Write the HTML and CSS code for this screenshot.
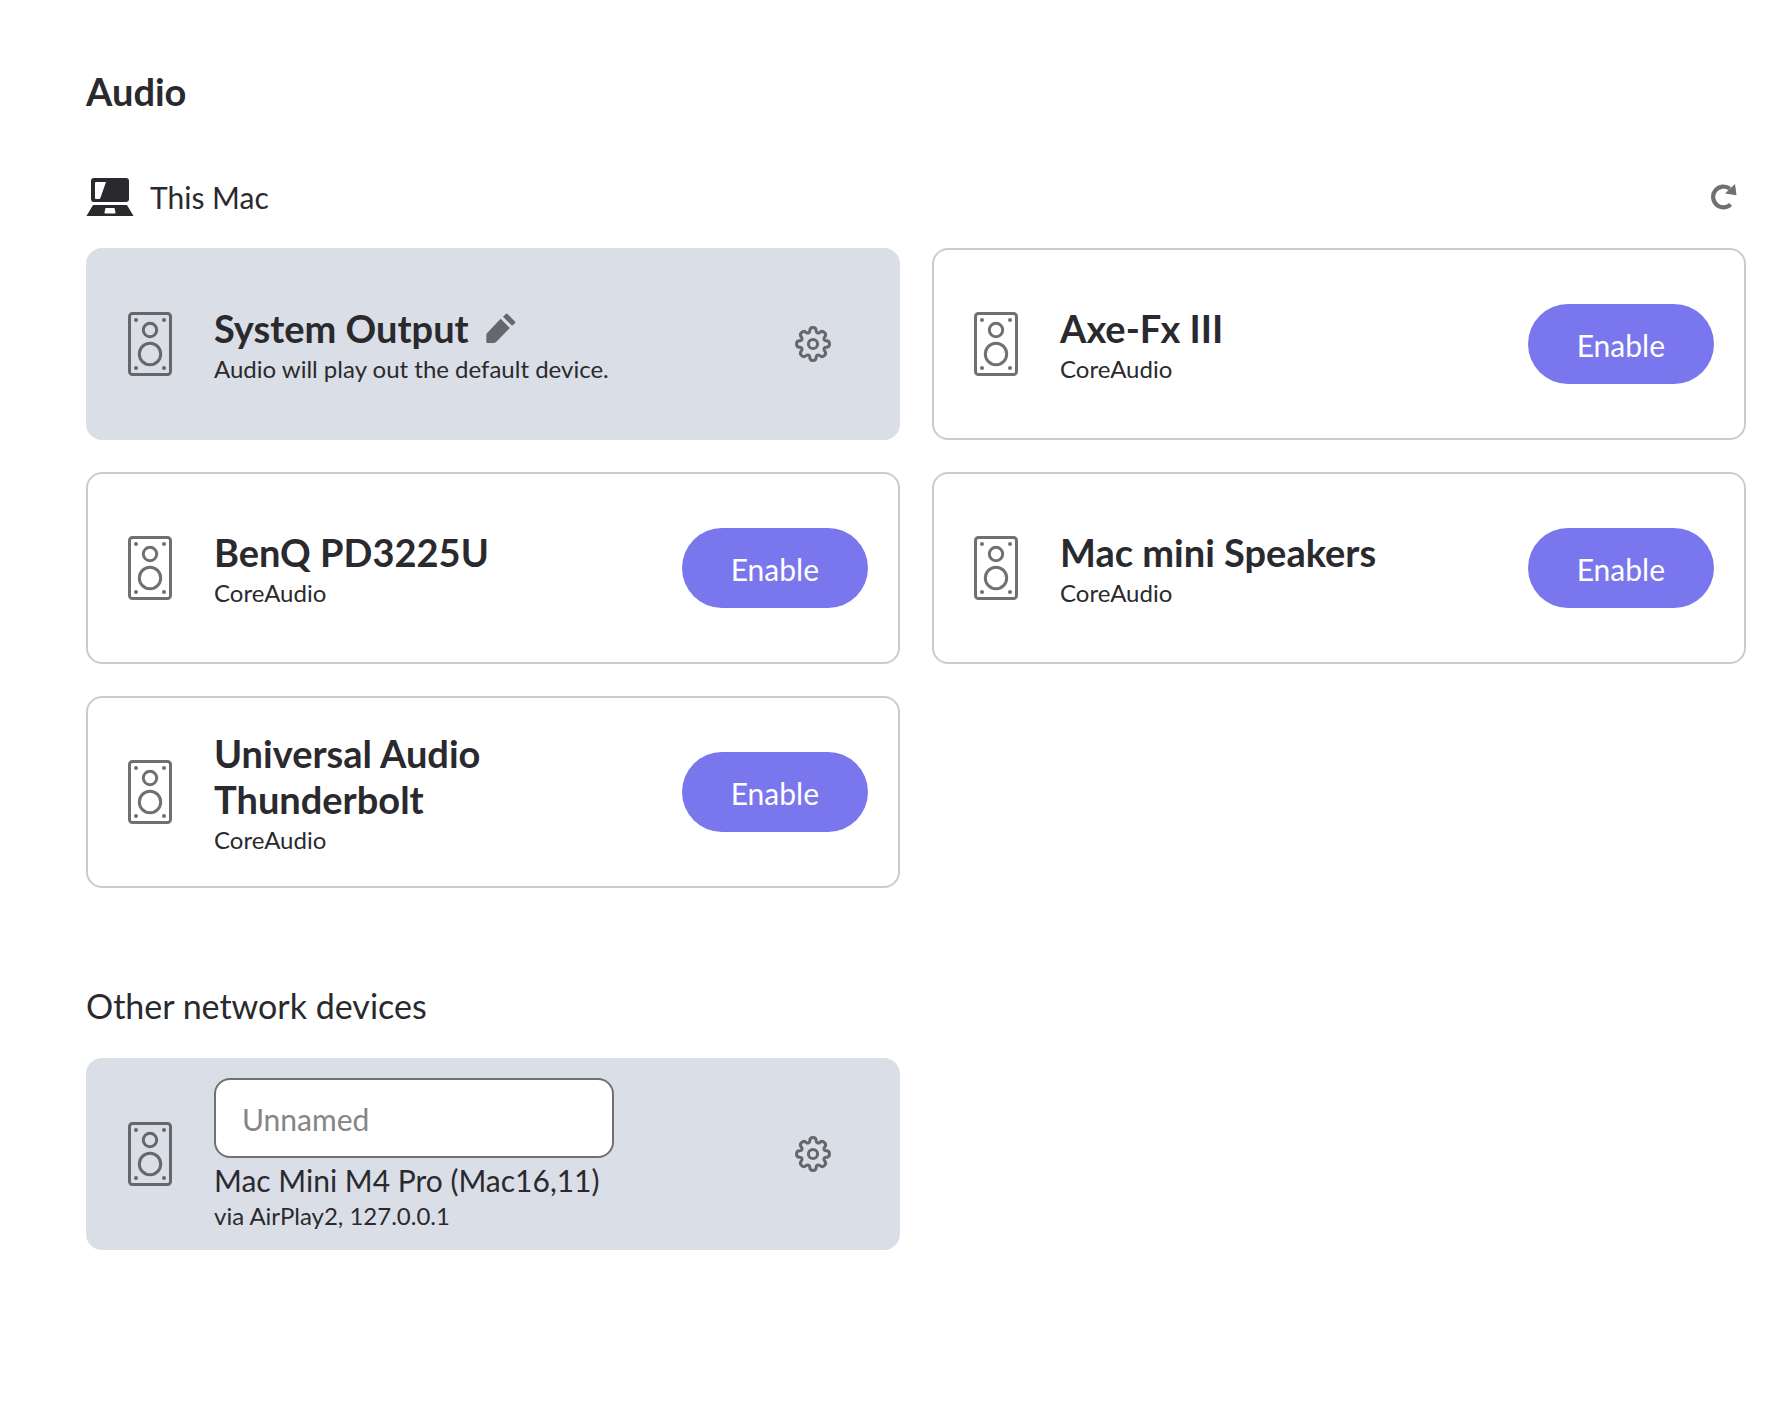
FILE: index.html
```
<!DOCTYPE html>
<html lang="en">
<head>
    <meta charset="UTF-8">
    <meta name="viewport" content="width=device-width, initial-scale=1.0">
    <title>Audio</title>
    <link rel="stylesheet" href="styles.css">
</head>
<body>

    <!-- Shared icons -->
    <svg class="icon-defs" aria-hidden="true">
        <symbol id="icon-speaker" viewBox="0 0 44 64">
            <g fill="none" stroke="currentColor" stroke-width="3">
                <rect x="1.5" y="1.5" width="41" height="61" rx="3"/>
                <circle cx="22" cy="18" r="6.7"/>
                <circle cx="22" cy="42" r="10.7"/>
            </g>
            <g fill="currentColor">
                <circle cx="8" cy="8" r="2"/>
                <circle cx="36" cy="8" r="2"/>
                <circle cx="8" cy="56" r="2"/>
                <circle cx="36" cy="56" r="2"/>
            </g>
        </symbol>
        <symbol id="icon-gear" viewBox="0 0 36 36">
            <g fill="none" stroke="currentColor" stroke-width="3" stroke-linejoin="round">
                <path d="M14.8 4.7C14.8 2.5 16.2 1.5 18 1.5S21.2 2.5 21.2 4.7C21.2 7 23.2 7.8 24.9 6.3C26.6 4.9 28.2 5.2 29.5 6.5S31.1 9.4 29.7 11.1C28.2 12.8 29 14.8 31.3 14.8C33.5 14.8 34.5 16.2 34.5 18S33.5 21.2 31.3 21.2C29 21.2 28.2 23.2 29.7 24.9C31.1 26.6 30.8 28.2 29.5 29.5S26.6 31.1 24.9 29.7C23.2 28.2 21.2 29 21.2 31.3C21.2 33.5 19.8 34.5 18 34.5S14.8 33.5 14.8 31.3C14.8 29 12.8 28.2 11.1 29.7C9.4 31.1 7.8 30.8 6.5 29.5S4.9 26.6 6.3 24.9C7.8 23.2 7 21.2 4.7 21.2C2.5 21.2 1.5 19.8 1.5 18S2.5 14.8 4.7 14.8C7 14.8 7.8 12.8 6.3 11.1C4.9 9.4 5.2 7.8 6.5 6.5S9.4 4.9 11.1 6.3C12.8 7.8 14.8 7 14.8 4.7Z"/>
                <circle cx="18" cy="18" r="4.6"/>
            </g>
        </symbol>
    </svg>

    <main class="page">
        <h1 class="page-title">Audio</h1>

        <section class="device-section">
            <header class="host">
                <svg class="host-icon" viewBox="0 0 48 38" aria-hidden="true">
                    <path fill="currentColor" fill-rule="evenodd" d="M8 0H40Q43 0 43 3V21Q43 24 40 24H8Q5 24 5 21V3Q5 0 8 0ZM10 4Q9 4 9 5V20Q9 21 10 21H13Q14 21 14.4 20L20 4Z"/>
                    <path fill="currentColor" fill-rule="evenodd" d="M7.5 27H40.5Q41 27 41.3 27.6L47.5 38H.5L6.7 27.6Q7 27 7.5 27ZM20 30Q19.4 30 19.3 30.6L18.5 34.4Q18.3 35.5 19.3 35.5H28.7Q29.7 35.5 29.5 34.4L28.7 30.6Q28.6 30 28 30Z"/>
                </svg>
                <h2 class="host-name">This Mac</h2>
                <button class="icon-button refresh" aria-label="Refresh devices">
                    <svg class="refresh-icon" viewBox="0 0 26 26" aria-hidden="true">
                        <path fill="none" stroke="currentColor" stroke-width="4.2" d="M19.6 20.5A10.4 10.4 0 1 1 18.8 4.6"/>
                        <path fill="currentColor" d="M24 0L25.5 11.2L14 9.5Z"/>
                    </svg>
                </button>
            </header>

            <div class="device-grid">
                <article class="device device-active">
                    <svg class="device-icon"><use href="#icon-speaker"/></svg>
                    <div class="device-info">
                        <h3 class="device-name">System Output
                            <button class="icon-button edit" aria-label="Rename">
                                <svg class="edit-icon" viewBox="0 0 29 29" aria-hidden="true">
                                    <path fill="currentColor" d="M14.2 5.6L23 14.4L9.8 28Q8.8 29 7.4 29H1.5Q.3 29 .3 27.8V21.5Q.3 20 1.3 19Z"/>
                                    <path fill="currentColor" d="M16.4 3.6L19.2.9Q20 .2 20.8.9L28 8.2Q28.8 9 28 9.8L25.2 12.4Z"/>
                                </svg>
                            </button>
                        </h3>
                        <p class="device-detail">Audio will play out the default device.</p>
                    </div>
                    <button class="icon-button settings" aria-label="System Output settings">
                        <svg class="gear-icon"><use href="#icon-gear"/></svg>
                    </button>
                </article>

                <article class="device">
                    <svg class="device-icon"><use href="#icon-speaker"/></svg>
                    <div class="device-info">
                        <h3 class="device-name">Axe-Fx III</h3>
                        <p class="device-detail">CoreAudio</p>
                    </div>
                    <button class="enable-button">Enable</button>
                </article>

                <article class="device">
                    <svg class="device-icon"><use href="#icon-speaker"/></svg>
                    <div class="device-info">
                        <h3 class="device-name">BenQ PD3225U</h3>
                        <p class="device-detail">CoreAudio</p>
                    </div>
                    <button class="enable-button">Enable</button>
                </article>

                <article class="device">
                    <svg class="device-icon"><use href="#icon-speaker"/></svg>
                    <div class="device-info">
                        <h3 class="device-name">Mac mini Speakers</h3>
                        <p class="device-detail">CoreAudio</p>
                    </div>
                    <button class="enable-button">Enable</button>
                </article>

                <article class="device">
                    <svg class="device-icon"><use href="#icon-speaker"/></svg>
                    <div class="device-info">
                        <h3 class="device-name">Universal Audio Thunderbolt</h3>
                        <p class="device-detail">CoreAudio</p>
                    </div>
                    <button class="enable-button">Enable</button>
                </article>
            </div>
        </section>

        <section class="device-section">
            <h2 class="section-title">Other network devices</h2>

            <div class="device-grid">
                <article class="device device-active">
                    <svg class="device-icon"><use href="#icon-speaker"/></svg>
                    <div class="device-info">
                        <input class="name-input" type="text" placeholder="Unnamed" aria-label="Device name">
                        <p class="device-model">Mac Mini M4 Pro (Mac16,11)</p>
                        <p class="device-detail">via AirPlay2, 127.0.0.1</p>
                    </div>
                    <button class="icon-button settings" aria-label="Mac Mini settings">
                        <svg class="gear-icon"><use href="#icon-gear"/></svg>
                    </button>
                </article>
            </div>
        </section>
    </main>

</body>
</html>
```
FILE: styles.css
```
* {
    box-sizing: border-box;
}
body {
    margin: 0;
    background-color: #fff;
    color: #2a2a2e;
    font-family: Lato, sans-serif;
    font-size: 30px;
    line-height: 36px;
}
h1, h2, h3, p {
    margin: 0;
    font-weight: 400;
}
button, input {
    font: inherit;
}
.icon-defs {
    display: none;
}
.page {
    padding: 68px 44px 80px 86px;
}
.page-title {
    font-size: 38px;
    font-weight: 700;
    line-height: 46px;
    margin-bottom: 64px;
}
.device-section {
    margin-bottom: 96px;
}
.host {
    display: flex;
    align-items: center;
    gap: 16px;
    height: 38px;
    margin-bottom: 32px;
}
.host-icon {
    width: 48px;
    height: 38px;
}
.host-name {
    flex-grow: 1;
    font-size: 30px;
}
.icon-button {
    display: inline-flex;
    padding: 0;
    border: none;
    background: none;
    color: #707070;
    cursor: pointer;
}
.refresh {
    padding-right: 9px;
}
.refresh-icon {
    width: 26px;
    height: 26px;
}
.section-title {
    padding-top: 2px;
    font-size: 34px;
    line-height: 40px;
    margin-bottom: 32px;
}
.device-grid {
    display: grid;
    grid-template-columns: 1fr 1fr;
    gap: 32px;
}
.device {
    display: flex;
    align-items: center;
    gap: 42px;
    min-height: 192px;
    padding: 14px 30px 14px 40px;
    border: 2px solid #ccc;
    border-radius: 16px;
}
.device-active {
    background-color: #dadee6;
    border-color: #dadee6;
}
.device-icon {
    flex-shrink: 0;
    width: 44px;
    height: 64px;
    color: #707070;
}
.device-active .device-icon,
.device-active .icon-button {
    color: #66676a;
}
.device-info {
    flex: 1;
    padding-top: 4px;
}
.device-name {
    font-size: 38px;
    font-weight: 700;
    line-height: 46px;
}
.device-detail {
    font-size: 24px;
}
.edit {
    margin-left: 8px;
}
.edit-icon {
    width: 30px;
    height: 30px;
}
.settings {
    padding: 37px;
}
.gear-icon {
    width: 36px;
    height: 36px;
}
.enable-button {
    height: 80px;
    padding: 2px 49px 0;
    border: none;
    border-radius: 40px;
    background-color: #7a76ed;
    color: #fff;
    cursor: pointer;
}
.name-input {
    display: block;
    width: 100%;
    max-width: 400px;
    height: 80px;
    margin-bottom: 4px;
    padding: 2px 26px 0;
    border: 2px solid #707070;
    border-radius: 16px;
    background-color: #fff;
    color: inherit;
}
.name-input::placeholder {
    color: #858585;
}
```
